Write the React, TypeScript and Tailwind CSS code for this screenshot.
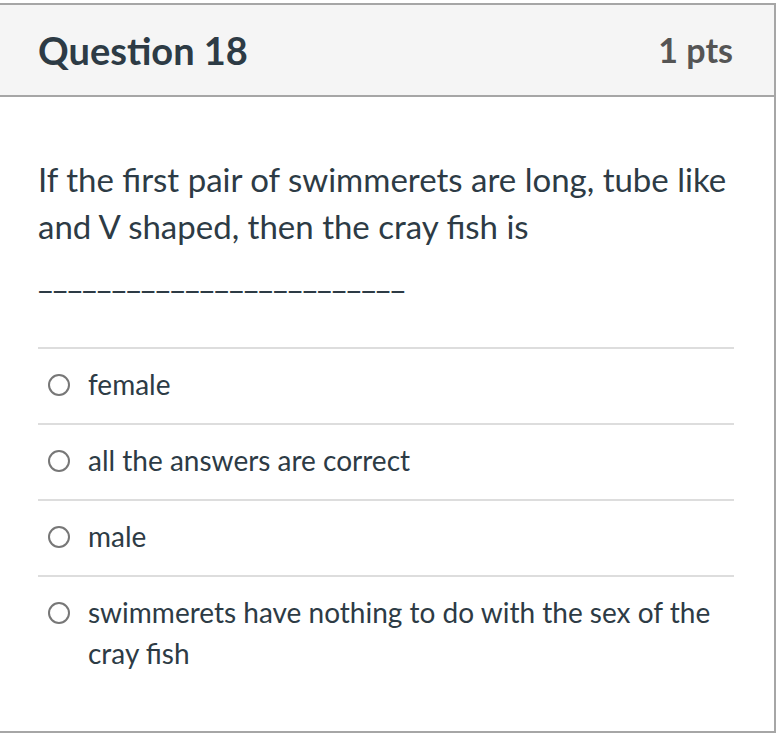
import React from 'react'

const options = [
  'female',
  'all the answers are correct',
  'male',
  'swimmerets have nothing to do with the sex of the cray fish',
]

export default function App() {
  return (
    <div className="min-h-[740px] bg-white pt-[3px]" style={{ fontFamily: 'Lato, "Noto Sans", sans-serif' }}>
      <div className="w-[776px] border-y-2 border-r-2 border-[#a6a6a6] text-[#2d3b45]">
        <div className="flex h-[92px] items-center justify-between border-b-2 border-[#a6a6a6] bg-[#f5f5f5] pl-[38px] pr-[41px]">
          <h2 className="text-[38px] font-bold leading-none">Question 18</h2>
          <span className="text-[34px] font-bold leading-none text-[#555555]">1 pts</span>
        </div>
        <div className="pl-[38px] pr-[40px] pt-[59px]">
          <p className="text-[33px] leading-[47px]">
            If the first pair of swimmerets are long, tube like and V shaped, then the cray fish is
          </p>
          <p className="mt-[2px] text-[32px] leading-[47px]">_________________________</p>
          <div className="mt-[48px]">
            {options.map((o) => (
              <label key={o} className="flex items-start gap-[18px] border-t-2 border-[#dddddd] pb-[18px] pl-[10px] pt-[15px]">
                <span className="mt-[10px] h-[22px] w-[22px] shrink-0 rounded-full border-2 border-[#777777] bg-white" />
                <span className="text-[28px] leading-[41px]">{o}</span>
              </label>
            ))}
          </div>
          <div className="h-[39px]" />
        </div>
      </div>
    </div>
  )
}
